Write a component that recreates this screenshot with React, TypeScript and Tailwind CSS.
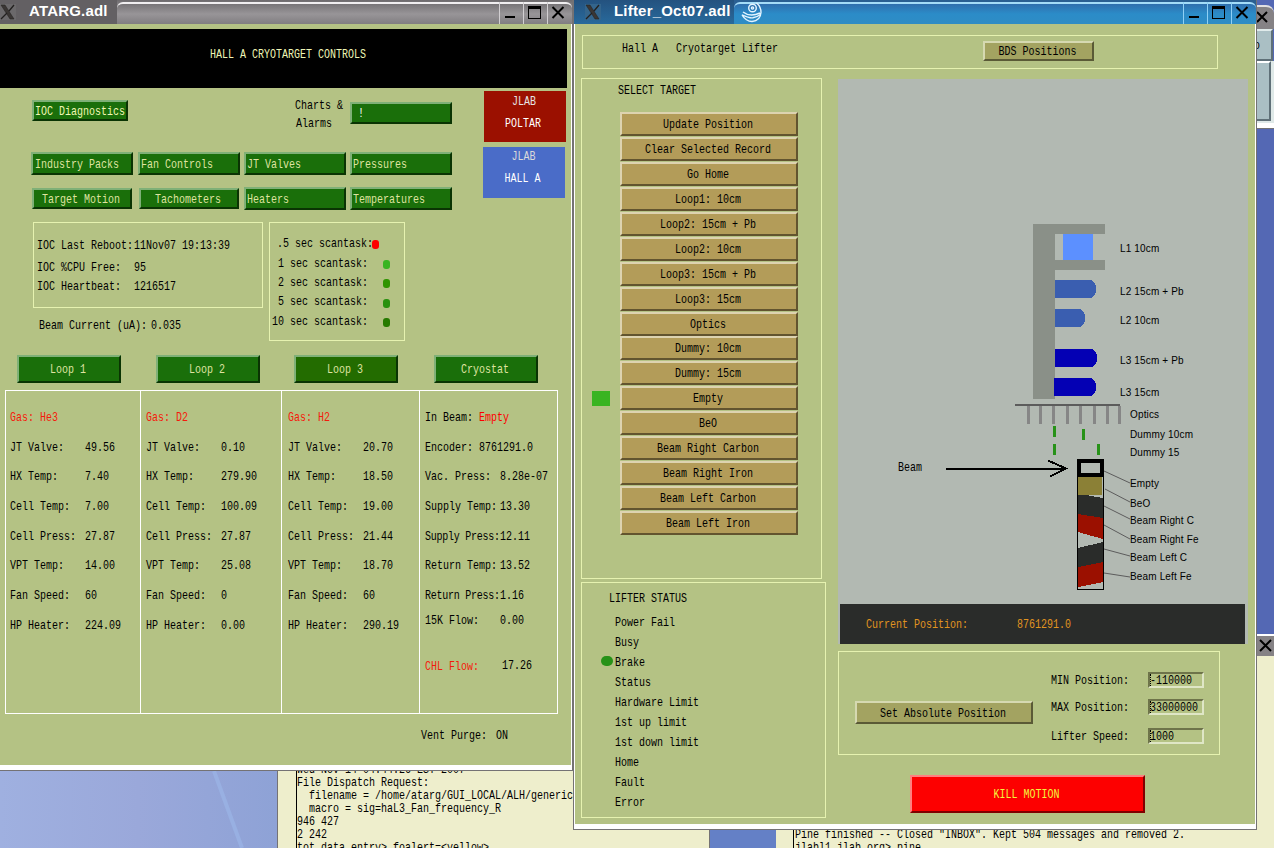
import type { ReactNode } from "react";
import clsx from "clsx";

// Narrow terminal face: 6px advance, stretched to a 13px cell
function Txt({ children, className }: { children: ReactNode; className?: string }) {
  return (
    <span
      className={clsx(
        "inline-block whitespace-pre font-['Liberation_Mono',monospace] text-[10px] leading-[10px] translate-y-px scale-y-[1.36]",
        className,
      )}
    >
      {children}
    </span>
  );
}

const BEVELS = {
  green: "bg-[#1a6f0a] border-t-[#7fb077] border-l-[#7fb077] border-b-[#0a3403] border-r-[#0a3403] text-[#dfe3a0]",
  moss: "bg-[#236c00] border-t-[#7fb077] border-l-[#7fb077] border-b-[#0a3403] border-r-[#0a3403] text-[#dfe3a0]",
  tan: "bg-[#b39c59] border-t-[#ddd3b0] border-l-[#ddd3b0] border-b-[#62542f] border-r-[#62542f] text-black",
  olive: "bg-[#a3a361] border-t-[#d6d9b1] border-l-[#d6d9b1] border-b-[#5a5a36] border-r-[#5a5a36] text-black",
  red: "bg-[#fd0000] border-t-[#ff7f7f] border-l-[#ff7f7f] border-b-[#800000] border-r-[#800000] text-[#f4f43c]",
};

type ButtonProps = {
  tone?: keyof typeof BEVELS;
  className?: string;
  children: ReactNode;
};

function Button({ tone = "green", className, children }: ButtonProps) {
  return (
    <button type="button" className={clsx("flex shrink-0 items-center border-2", BEVELS[tone], className)}>
      <Txt>{children}</Txt>
    </button>
  );
}

function XLogo({ active }: { active?: boolean }) {
  return (
    <svg width="16" height="16" viewBox="0 0 16 16" className="shrink-0">
      <rect width="16" height="16" fill={active ? "#34658c" : "#6b696b"} />
      <path d="M1 1h4l9 14h-4z" fill="#3a3634" stroke="#22201f" strokeWidth=".5" />
      <path d="M14 1L9 7M7 9L1 15" stroke="#22201f" strokeWidth="1.3" />
    </svg>
  );
}

function WindowControls({ active }: { active?: boolean }) {
  const cell = clsx(
    "flex h-[22px] w-6 items-center justify-center border-l pr-[3px] pb-0.5",
    active ? "border-[#8fd0f5]" : "border-[#d2cfd2]",
  );
  return (
    <div className="flex self-end pr-px">
      <div className={cell}>
        <svg width="14" height="14" viewBox="0 0 14 14">
          <path d="M2 12h10" stroke="#000" strokeWidth="2" />
        </svg>
      </div>
      <div className={cell}>
        <svg width="14" height="14" viewBox="0 0 14 14" shapeRendering="crispEdges">
          <path d="M1.500 1.500h12v12h-12z" fill="none" stroke="#000" />
          <path d="M1 2.500h13" stroke="#000" strokeWidth="3" />
        </svg>
      </div>
      <div className={cell}>
        <svg width="14" height="14" viewBox="0 0 14 14">
          <path d="M1.500 2l11 11M12.500 2l-11 11" stroke="#000" strokeWidth="2" />
        </svg>
      </div>
    </div>
  );
}

function Title({ children }: { children: ReactNode }) {
  return (
    <span className="-mt-0.5 block font-['Liberation_Sans',sans-serif] text-[15px] leading-[24px] font-bold tracking-[0.2px] whitespace-nowrap text-white">
      {children}
    </span>
  );
}

function Field({ label, value, labelWidth = "w-[75px]", className, valueClass, labelClass }: {
  label: string;
  value: string;
  labelWidth?: string;
  className?: string;
  valueClass?: string;
  labelClass?: string;
}) {
  return (
    <div className={clsx("flex items-center", className)}>
      <div className={clsx("flex shrink-0", labelWidth)}>
        <Txt className={labelClass}>{label}</Txt>
      </div>
      <Txt className={valueClass}>{value}</Txt>
    </div>
  );
}

const LOOPS = [
  {
    gas: "Gas: He3",
    box: "w-[134px] pl-1",
    rows: ["49.56", "7.40", "7.00", "27.87", "14.00", "60", "224.09"],
  },
  {
    gas: "Gas: D2",
    box: "w-[141px] pl-[5px] border-l border-white",
    rows: ["0.10", "279.90", "100.09", "27.87", "25.08", "0", "0.00"],
  },
  {
    gas: "Gas: H2",
    box: "w-[138px] pl-[6px] border-l border-white",
    rows: ["20.70", "18.50", "19.00", "21.44", "18.70", "60", "290.19"],
  },
];

const LOOP_LABELS = ["JT Valve:", "HX Temp:", "Cell Temp:", "Cell Press:", "VPT Temp:", "Fan Speed:", "HP Heater:"];

const CRYOSTAT = [
  ["Vac. Press:", "8.28e-07"],
  ["Supply Temp:", "13.30"],
  ["Supply Press:", "12.11"],
  ["Return Temp:", "13.52"],
  ["Return Press:", "1.16"],
];

const SCANTASKS = [
  { label: " 1 sec scantask:", dot: "bg-[#39b421]", row: "h-[19px]" },
  { label: " 2 sec scantask:", dot: "bg-[#2f9400]", row: "h-[19px]" },
  { label: " 5 sec scantask:", dot: "bg-[#29910f]", row: "h-[20px]" },
  { label: "10 sec scantask:", dot: "bg-[#267a00]", row: "h-[19px]" },
];

function TargetWindow() {
  return (
    <section className="absolute top-0 left-0 flex h-[771px] w-[573px] flex-col border-r border-b border-[#747274] bg-white">
      <header className="flex h-6 w-full shrink-0 bg-linear-to-b from-[#6d6a6d] via-[#a29fa2] to-[#7d7a7d]">
        <div className="flex w-[117px] items-center bg-[#636063]">
          <XLogo />
          <div className="pl-[13px]">
            <Title>ATARG.adl</Title>
          </div>
        </div>
        <div className="mt-0.5 flex flex-1 justify-end rounded-t-md border-t-2 border-[#f0eef0] bg-linear-to-b from-[#777477] via-[#989598] to-[#817e81]">
          <WindowControls />
        </div>
      </header>

      <div className="h-[741px] w-[571px] bg-[#b4c284] pt-[5px]">
        <div className="flex h-[59px] w-[567px] justify-center bg-black pt-5 pl-[9px] text-[#eef6b6]">
          <Txt className="h-[10px]">HALL A CRYOTARGET CONTROLS</Txt>
        </div>

        <div className="flex h-[134px]">
          <div className="flex w-[452px] flex-col pl-[31px]">
            <div className="flex h-16 pt-3">
              <Button className="ml-px h-[21px] w-24 px-px text-[#f0f6b4]">IOC Diagnostics</Button>
              <div className="ml-[167px] flex w-14 flex-col gap-2">
                <Txt>Charts &</Txt>
                <Txt className="pl-px">Alarms</Txt>
              </div>
              <Button className="mt-0.5 h-[22px] w-[102px] px-1.5">
                <span className="text-white">!</span>
              </Button>
            </div>
            <div className="flex h-[35px] gap-1">
              <Button className="mr-px h-[23px] w-[102px] px-0.5">Industry Packs</Button>
              <Button className="h-[23px] w-[102px] px-px">Fan Controls</Button>
              <Button className="h-[23px] w-[102px] px-px">JT Valves</Button>
              <Button className="h-[23px] w-[102px] px-px">Pressures</Button>
            </div>
            <div className="flex items-center gap-1 self-start">
              <Button className="mr-0.5 ml-px h-[21px] w-[100px] justify-center pr-0.5">Target Motion</Button>
              <Button className="mx-px h-[21px] w-[100px] justify-center pr-0.5">Tachometers</Button>
              <Button className="h-[23px] w-[102px] px-px">Heaters</Button>
              <Button className="h-[23px] w-[102px] px-px">Temperatures</Button>
            </div>
          </div>
          <div className="flex flex-col gap-[5px] pt-[3px] pl-[31px]">
            <div className="ml-px flex h-[51px] w-[82px] flex-col items-center gap-3 bg-[#9b1000] pt-[5px] pr-0.5 text-[#e6e4e4]">
              <Txt>JLAB</Txt>
              <Txt className="pr-0.5 text-white">POLTAR</Txt>
            </div>
            <div className="flex h-[51px] w-[82px] flex-col items-center gap-3 bg-[#4a6cc8] pt-1 pr-px text-[#dadada]">
              <Txt>JLAB</Txt>
              <Txt className="pr-0.5 text-white">HALL A</Txt>
            </div>
          </div>
        </div>

        <div className="flex h-[133px]">
          <div className="w-[269px] pl-[33px]">
            <div className="flex h-[86px] w-[230px] flex-col border border-[#e6f2b0] pt-[11px] pl-[3px]">
              <Field label="IOC Last Reboot:" value="11Nov07 19:13:39" labelWidth="w-[97px]" className="h-[21px]" />
              <Field label="IOC %CPU Free:" value="95" labelWidth="w-[97px]" className="h-[23px]" />
              <Field label="IOC Heartbeat:" value="1216517" labelWidth="w-[97px]" className="h-[15px]" />
            </div>
            <Field
              label="Beam Current (uA):"
              value="0.035"
              labelWidth="w-28"
              className="mt-3 ml-[6px]"
              valueClass="-mt-px"
            />
          </div>
          <div className="flex h-[119px] w-[136px] flex-col border border-[#e6f2b0] pt-[10px] pl-[2px]">
            <div className="flex h-5 items-center pl-[5px]">
              <Txt>.5 sec scantask:</Txt>
              <span className="mt-0.5 -ml-px h-[9px] w-[7px] rounded-[3px] bg-[#fd0000]" />
            </div>
            {SCANTASKS.map((task) => (
              <div key={task.label} className={clsx("flex items-center gap-[15px]", task.row)}>
                <Txt>{task.label}</Txt>
                <span className={clsx("mt-1 h-[9px] w-[7px] rounded-[3px]", task.dot)} />
              </div>
            ))}
          </div>
        </div>

        <div className="flex h-[35px] pl-[17px]">
          <Button className="h-7 w-[104px] justify-center pr-0.5">Loop 1</Button>
          <Button className="ml-[35px] h-7 w-[104px] justify-center pr-0.5">Loop 2</Button>
          <Button tone="moss" className="ml-[34px] h-7 w-[104px] justify-center pr-0.5">Loop 3</Button>
          <Button className="ml-9 h-7 w-[104px] justify-center pr-0.5">Cryostat</Button>
        </div>

        <div className="ml-[5px] flex h-[324px] w-[553px] border border-white pt-px">
          {LOOPS.map((loop) => (
            <div key={loop.gas} className={clsx("-mt-px shrink-0 pt-[11px]", loop.box)}>
              <div className="flex h-[29.7px] items-center text-[#f41a0c]">
                <Txt>{loop.gas}</Txt>
              </div>
              {LOOP_LABELS.map((label, i) => (
                <Field key={label} label={label} value={loop.rows[i]} className="h-[29.7px]" />
              ))}
            </div>
          ))}
          <div className="-mt-px flex-1 border-l border-white pt-[11px] pl-[5px]">
            <Field label="In Beam:" value="Empty" labelWidth="w-[54px]" className="h-[29.7px]" valueClass="text-[#fd0000]" />
            <Field label="Encoder:" value="8761291.0" labelWidth="w-[54px]" className="h-[29.7px]" />
            {CRYOSTAT.map(([label, value]) => (
              <Field
                key={label}
                label={label}
                value={value}
                className="h-[29.7px]"
                labelClass={label.length > 12 ? "tracking-[-0.25px]" : undefined}
              />
            ))}
            <Field label="15K Flow:" value="0.00" className="h-5" />
            <div className="mt-[26px] flex h-5 items-center">
              <Txt className="w-[77px] text-[#f41a0c]">CHL Flow:</Txt>
              <Txt className="-mt-0.5">17.26</Txt>
            </div>
          </div>
        </div>

        <Field label="Vent Purge:" value="ON" className="mt-4 ml-[421px]" />
      </div>
    </section>
  );
}

const TARGETS = [
  "Update Position",
  "Clear Selected Record",
  "Go Home",
  "Loop1: 10cm",
  "Loop2: 15cm + Pb",
  "Loop2: 10cm",
  "Loop3: 15cm + Pb",
  "Loop3: 15cm",
  "Optics",
  "Dummy: 10cm",
  "Dummy: 15cm",
  "Empty",
  "BeO",
  "Beam Right Carbon",
  "Beam Right Iron",
  "Beam Left Carbon",
  "Beam Left Iron",
];

const STATUS = [
  "Power Fail",
  "Busy",
  "Brake",
  "Status",
  "Hardware Limit",
  "1st up limit",
  "1st down limit",
  "Home",
  "Fault",
  "Error",
];

const DIAGRAM_LABELS: [number, number, string][] = [
  [1120, 252, "L1 10cm"],
  [1120, 295, "L2 15cm + Pb"],
  [1120, 324, "L2 10cm"],
  [1120, 364, "L3 15cm + Pb"],
  [1120, 396, "L3 15cm"],
  [1130, 418, "Optics"],
  [1130, 438, "Dummy 10cm"],
  [1130, 456, "Dummy 15"],
  [1130, 487, "Empty"],
  [1130, 507, "BeO"],
  [1130, 524, "Beam Right C"],
  [1130, 543, "Beam Right Fe"],
  [1130, 561, "Beam Left C"],
  [1130, 580, "Beam Left Fe"],
];

const TICKS = [1027, 1039, 1052, 1066, 1079, 1093, 1106, 1118];

function TargetLadder() {
  return (
    <svg width="410" height="525" viewBox="838 79 410 525" shapeRendering="crispEdges" className="block">
      {/* support frame */}
      <path d="M1033 224h72v10h-50v26h50v10h-50v129h-22z" fill="#8a9088" />
      <rect x="1063" y="234" width="30" height="26" fill="#5c90ff" />

      {/* cells */}
      <path d="M1055 280h36l3 2 2 4v6l-2 4-3 2h-36z" fill="#3a5eb0" />
      <path d="M1055 309h25l3 2 2 4v6l-2 4-3 2h-25z" fill="#3a5eb0" />
      <path d="M1055 349h37l3 2 2 4v6l-2 4-3 2h-37z" fill="#0400b4" />
      <path d="M1054 378h37l3 2 2 4v6l-2 4-3 2h-37z" fill="#0400b4" />

      {/* optics comb */}
      {TICKS.map((x) => (
        <rect key={x} x={x} y="406" width="3" height="18" fill="#868686" />
      ))}
      <rect x="1015" y="404" width="105" height="2" fill="#5c5c5c" />

      {/* dummies */}
      <path d="M1053 426h3v11h-3zM1082 429h3v11h-3zM1053 444h3v11h-3zM1097 444h3v11h-3z" fill="#279218" />

      {/* beam arrow */}
      <path d="M946 469h119" stroke="#000" strokeWidth="2" />
      <path d="M1048 460.500l18 8-16 8" fill="none" stroke="#000" strokeWidth="2" />

      {/* solid target stack */}
      <rect x="1078" y="477" width="24" height="18" fill="#8b8036" />
      <path d="M1078 495h8l17 3v20l-25-4z" fill="#2a2c2a" />
      <path d="M1078 514l25 4v21l-25-7z" fill="#9b1000" />
      <path d="M1078 548l25-6v20l-25 5z" fill="#2a2c2a" />
      <path d="M1078 567l25-5v20l-25 5z" fill="#9b1000" />
      <rect x="1077.500" y="460.500" width="26" height="129" fill="none" stroke="#000" />
      <rect x="1079" y="461" width="23" height="14" fill="none" stroke="#000" strokeWidth="4" />

      <path
        d="M1104 471l26 12M1105 489l25 13M1104 506l26 13M1104 525l26 14M1104 549l26 7M1104 573l26 4"
        stroke="#5c5c5c"
        shapeRendering="auto"
      />

      {DIAGRAM_LABELS.map(([x, y, label]) => (
        <text
          key={label}
          transform={`translate(${x} ${y}) scale(1 1.14)`}
          className="font-['Liberation_Sans',sans-serif] text-[10px] tracking-[0.15px]"
        >
          {label}
        </text>
      ))}
      <text transform="translate(898 471) scale(1 1.3)" className="font-['Liberation_Mono',monospace] text-[10px]">
        Beam
      </text>
    </svg>
  );
}

function Limit({ label, value, className }: { label: string; value: string; className?: string }) {
  return (
    <div className={clsx("flex h-4 items-center", className)}>
      <div className="flex w-[97px]">
        <Txt>{label}</Txt>
      </div>
      <div className="flex h-4 w-14 items-center border-2 border-t-[#6e744a] border-r-[#dfe6c6] border-b-[#dfe6c6] border-l-[#6e744a]">
        <span className="h-3 border-l border-dotted border-black" />
        <Txt className="-ml-px">{value}</Txt>
      </div>
    </div>
  );
}

function Swirl() {
  return (
    <svg width="21" height="21" viewBox="0 0 21 21" fill="none" stroke="#e4f4ff" strokeWidth="1.4" className="mt-0.5 shrink-0">
      <circle cx="11.500" cy="6" r="3.800" />
      <circle cx="11.500" cy="6" r="1.100" />
      <path d="M2 10q7 5.500 17 1M.8 12.800q8 3.500 11 3 5-1 8-3.500M1 13q4 6.500 10 6.500 8.500-1 9-9 0-6-4.500-9.500" />
    </svg>
  );
}

function LifterWindow() {
  return (
    <section className="absolute top-0 left-[573px] flex h-[830px] w-[684px] flex-col border-r border-b border-l border-[#747274] bg-white">
      <header className="flex h-6 shrink-0 bg-[#2a5f92]">
        <div className="flex w-[160px] items-center bg-linear-to-b from-[#24527f] to-[#286a9c] pl-[11px]">
          <XLogo active />
          <div className="pl-[13px]">
            <Title>Lifter_Oct07.adl</Title>
          </div>
        </div>
        <div className="mt-0.5 flex flex-1 items-start rounded-t-md border-t-2 border-[#a4dcf8] bg-linear-to-b from-[#2f6fae] via-[#2b8cc8] to-[#2f8cc4]">
          <div className="-mt-1 flex-1 pl-[7px]">
            <Swirl />
          </div>
          <WindowControls active />
        </div>
      </header>

      <div className="ml-px flex h-[800px] w-[680px] flex-col bg-[#b4c284] pt-[11px] pl-1.5">
        <div className="ml-px flex h-[34px] w-[636px] border border-[#e6f2b0]">
          <div className="flex w-[400px] items-start pt-[7px] pl-[39px]">
            <Txt>Hall A   Cryotarget Lifter</Txt>
          </div>
          <Button tone="olive" className="mt-[5px] h-5 w-[111px] justify-center pr-0.5">BDS Positions</Button>
        </div>

        <div className="mt-[9px] flex">
          <div className="w-[257px]">
            <div className="h-[501px] w-[241px] border border-[#e6f2b0] pt-[3px]">
              <div className="ml-9 flex h-[30px] pt-[3px]">
                <Txt className="h-[10px]">SELECT TARGET</Txt>
              </div>
              {TARGETS.map((name) => (
                <div key={name} className="flex h-[24.95px] items-start">
                  <div className="w-[38px] pt-[5px] pl-[10px]">
                    {name === "Empty" && <div className="h-[15px] w-[18px] bg-[#39b421]" />}
                  </div>
                  <Button tone="tan" className="h-6 w-[178px] justify-center pr-0.5">{name}</Button>
                </div>
              ))}
            </div>
            <div className="mt-[3px] h-[236px] w-[245px] border border-[#e6f2b0] pt-[6px]">
              <div className="ml-[27px] flex h-[23px] items-start pt-1">
                <Txt>LIFTER STATUS</Txt>
              </div>
              {STATUS.map((name) => (
                <div key={name} className="flex h-5 items-center">
                  <div className="w-[33px] pl-[19px]">
                    {name === "Brake" && <div className="-mt-0.5 h-[10px] w-3 rounded-full bg-[#279218]" />}
                  </div>
                  <Txt>{name}</Txt>
                </div>
              ))}
            </div>
          </div>

          <div className="mt-px">
            <div className="w-[410px] bg-[#b2b9b2]">
              <TargetLadder />
              <div className="ml-0.5 flex h-10 w-[405px] items-center bg-[#2a2c2a] pl-[26px] text-[#e09420]">
                <Txt className="w-[151px]">Current Position:</Txt>
                <Txt>8761291.0</Txt>
              </div>
            </div>
            <div className="mt-[7px] flex h-[104px] w-[382px] border border-[#e6f2b0] pl-4">
              <Button tone="olive" className="mt-[49px] h-[23px] w-[178px] justify-center pr-0.5">
                Set Absolute Position
              </Button>
              <div className="pt-5 pl-[18px]">
                <Limit label="MIN Position:" value="-110000" />
                <Limit label="MAX Position:" value="33000000" className="mt-[11px]" />
                <Limit label="Lifter Speed:" value="1000" className="mt-[13px]" />
              </div>
            </div>
            <Button tone="red" className="mt-5 ml-[72px] h-[38px] w-[235px] justify-center pr-0.5">KILL MOTION</Button>
          </div>
        </div>
      </div>
    </section>
  );
}

// Parts of the desktop that stay visible around the two control windows
function Desktop() {
  return (
    <>
      <div className="absolute top-[771px] left-0 h-[77px] w-[277px] bg-linear-to-r from-[#9fb0e0] via-[#9aa8da] to-[#8ea2d6]">
        <svg width="277" height="77" viewBox="0 0 277 77">
          <path d="M214 0l28 77" stroke="#9db8ea" strokeWidth="4" opacity=".6" />
        </svg>
      </div>

      <div className="absolute top-[762px] left-[277px] flex h-[86px] w-[432px] overflow-hidden border-l border-[#747274] bg-[#eeeecc]">
        <div className="w-[19px] shrink-0 border-r border-black" />
        <div className="flex flex-col items-start gap-[3px] pt-0.5">
          <Txt>Wed Nov 14 04:44:26 EST 2007</Txt>
          <Txt>File Dispatch Request:</Txt>
          <Txt>{"  filename = /home/atarg/GUI_LOCAL/ALH/generic"}</Txt>
          <Txt>{"  macro = sig=haL3_Fan_frequency_R"}</Txt>
          <Txt>946 427</Txt>
          <Txt>2 242</Txt>
          <Txt>{"tot_data_entry> foalert=<yellow>"}</Txt>
        </div>
      </div>

      <div className="absolute top-[829px] left-[709px] h-[19px] w-[67px] border-l border-[#747274] bg-[#6480c6]" />

      <div className="absolute top-[656px] left-[776px] flex h-[192px] w-[498px] overflow-hidden bg-[#eeeecc]">
        <div className="w-[18px] shrink-0 border-r border-black" />
        <div className="flex flex-col items-start gap-[3px] pt-[173px] pl-px">
          <Txt>{'Pine finished -- Closed "INBOX". Kept 504 messages and removed 2.'}</Txt>
          <Txt>{"jlabl1.jlab.org> pine"}</Txt>
        </div>
      </div>

      <div className="absolute top-0 left-[1250px] flex h-[656px] w-6 flex-col bg-[#5468b4]">
        <div className="mt-[5px] flex h-6 items-center justify-end rounded-tr-lg border-t-2 border-[#e2e0e2] bg-[#858285] pr-1.5 pb-0.5">
          <svg width="12" height="12" viewBox="0 0 12 12">
            <path d="M1 1l10 10M11 1L1 11" stroke="#000" strokeWidth="2" />
          </svg>
        </div>
        <div className="flex h-8 w-[23px] items-center border-t-2 border-r-2 border-b-2 border-t-[#e0ebeb] border-r-[#5f7078] border-b-[#5f7078] bg-[#aabfc4] pl-1">
          <Txt>o</Txt>
        </div>
        <div className="h-[62px] bg-[#dfe9e8] pr-[3px]">
          <div className="h-[60px] border-t-2 border-r-2 border-b-2 border-t-white border-r-[#5f7078] border-b-[#5f7078] bg-[#aabfc4]" />
        </div>
        <div className="h-[6px] border-b border-[#747274] bg-white" />
        <div className="flex-1" />
        <div className="flex h-[22px] items-center justify-end border-t-2 border-white bg-[#858285] pr-0.5 pb-0.5">
          <svg width="13" height="13" viewBox="0 0 13 13">
            <path d="M1 1l11 11M12 1L1 12" stroke="#000" strokeWidth="2" />
          </svg>
        </div>
      </div>
    </>
  );
}

export default function App() {
  return (
    <main className="relative h-[848px] w-[1274px] overflow-hidden bg-[#5468b4] text-black">
      <Desktop />
      <TargetWindow />
      <LifterWindow />
    </main>
  );
}
